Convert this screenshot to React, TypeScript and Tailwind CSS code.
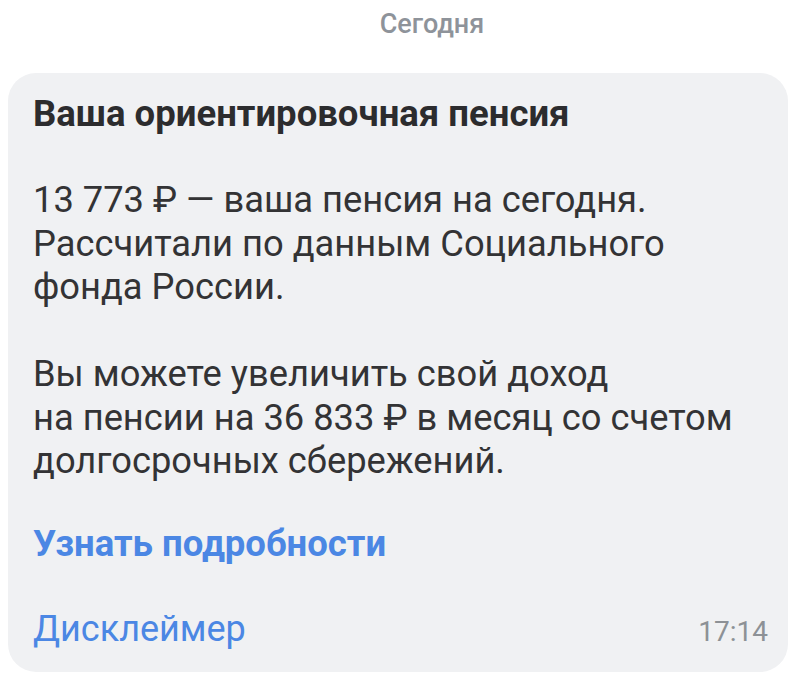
export default function App() {
  return (
    <div
      className="w-full min-h-[683px] bg-white pt-[6px]"
      style={{ fontFamily: 'Roboto, "Noto Sans", sans-serif' }}
    >
      <div className="flex justify-center pl-[64px]">
        <span className="text-[27px] leading-[36px] font-medium text-[#8e939a]">Сегодня</span>
      </div>

      <div className="mt-[31px] ml-[8px] w-[780px] rounded-[28px] bg-[#f0f1f3] pl-[25px] pr-[20px] pt-[19px] pb-[18px] text-[#2c2c2e]">
        <h2 className="text-[36.5px] leading-[44px] font-bold">Ваша ориентировочная пенсия</h2>

        <p className="mt-[42px] text-[36.3px] leading-[43.5px] text-[#333335]">
          13 773 ₽ — ваша пенсия на сегодня.
          <br />
          Рассчитали по данным Социального
          <br />
          фонда России.
        </p>

        <p className="mt-[43.5px] text-[36.3px] leading-[43.5px] text-[#333335]">
          Вы можете увеличить свой доход
          <br />
          на пенсии на 36 833 ₽ в месяц со счетом
          <br />
          долгосрочных сбережений.
        </p>

        <a className="mt-[39px] block text-[36.5px] leading-[44px] font-bold text-[#4b87e4]">
          Узнать подробности
        </a>

        <div className="mt-[41px] flex items-baseline justify-between">
          <a className="text-[36px] leading-[44px] text-[#4b87e4]">Дисклеймер</a>
          <span className="text-[28px] leading-[44px] text-[#8d9196]">17:14</span>
        </div>
      </div>
    </div>
  );
}
